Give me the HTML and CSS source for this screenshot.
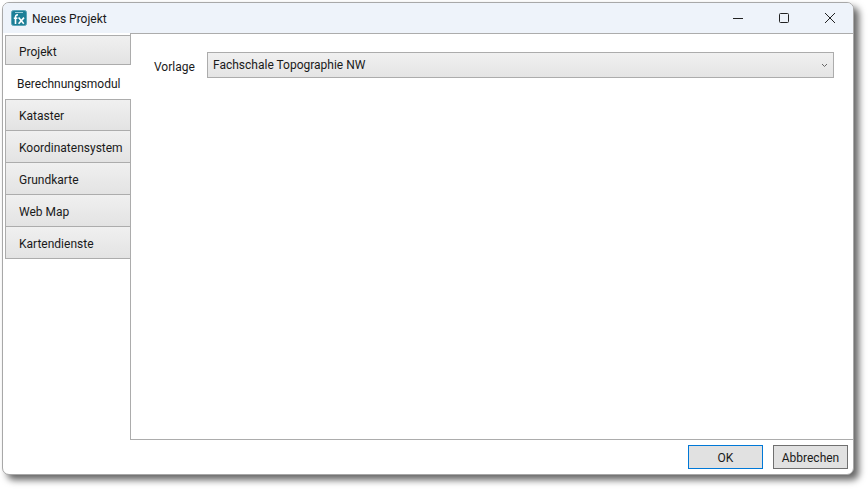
FILE: index.html
```html
<!DOCTYPE html>
<html lang="de">
<head>
<meta charset="utf-8">
<title>Neues Projekt</title>
<link rel="stylesheet" href="styles.css">
</head>
<body>
<div class="window">
  <header class="titlebar">
    <svg class="app-icon" width="16" height="16" viewBox="0 0 16 16"><rect x="0.5" y="0.5" width="15" height="15" rx="2" fill="#1d7f97" stroke="#5aa6b8"/><rect x="4" y="2" width="8" height="1" fill="#9fd0dc"/><path d="M4.5 14V7c0-1.6.8-2.2 2.4-2.1M2.8 8.2h3.6" fill="none" stroke="#fff" stroke-width="1.6"/><path d="M7.6 7.6l5.2 6.2M13 7.6l-5.4 6.2" fill="none" stroke="#fff" stroke-width="1.6"/></svg>
    <span class="title">Neues Projekt</span>
    <div class="caption-buttons">
      <button class="caption" aria-label="Minimieren"><svg width="12" height="12" viewBox="0 0 12 12"><path d="M1 6.5h10" stroke="#222" fill="none"/></svg></button>
      <button class="caption" aria-label="Maximieren"><svg width="12" height="12" viewBox="0 0 12 12"><rect x="1.5" y="1.5" width="9" height="9" rx="1" stroke="#222" fill="none"/></svg></button>
      <button class="caption" aria-label="Schließen"><svg width="12" height="12" viewBox="0 0 12 12"><path d="M1 1l10 10M11 1L1 11" stroke="#222" fill="none"/></svg></button>
    </div>
  </header>
  <div class="body">
    <nav class="tabs">
      <div class="tab first">Projekt</div>
      <div class="tab active">Berechnungsmodul</div>
      <div class="tab after-active">Kataster</div>
      <div class="tab">Koordinatensystem</div>
      <div class="tab">Grundkarte</div>
      <div class="tab">Web Map</div>
      <div class="tab">Kartendienste</div>
    </nav>
    <main class="panel">
      <div class="form-row">
        <label class="label">Vorlage</label>
        <div class="combo">
          <span>Fachschale Topographie NW</span>
          <svg width="7" height="5" viewBox="0 0 7 5"><path d="M1 1l2.5 2.5L6 1" stroke="#666" fill="none"/></svg>
        </div>
      </div>
    </main>
  </div>
  <footer class="footer">
    <button class="btn default">OK</button>
    <button class="btn">Abbrechen</button>
  </footer>
</div>
</body>
</html>
```
FILE: styles.css
```css
* { box-sizing: border-box; }
html, body { margin: 0; padding: 0; background: #fff; }
body { width: 868px; height: 489px; overflow: hidden; padding: 2px 0 0 2px; font-family: Roboto, sans-serif; font-size: 12px; color: #1a1a1a; }
.window { width: 852px; height: 473px; display: flex; flex-direction: column; background: #fff; border: 1px solid #a8a8a8; border-radius: 7px; box-shadow: 5px 5px 7px rgba(0,0,0,.6); overflow: hidden; }
.titlebar { height: 30px; flex: none; display: flex; align-items: center; background: #eef3fa; padding-left: 8px; }
.app-icon { flex: none; }
.title { margin-left: 5px; padding-top: 1px; }
.caption-buttons { margin-left: auto; display: flex; }
.caption { width: 46px; height: 30px; background: none; border: 0; padding: 0; display: flex; align-items: center; justify-content: center; }
.body { flex: 1; display: flex; min-height: 0; }
.tabs { width: 127px; flex: none; display: flex; flex-direction: column; padding-top: 2px; }
.tab { height: 32px; margin-left: 2px; display: flex; align-items: center; padding: 2px 0 0 13px; background: linear-gradient(#f0f0f0, #e3e3e3); border: 1px solid #acacac; border-right: 0; border-top: 0; }
.tab.first { height: 30px; padding-top: 3px; border-top: 1px solid #acacac; }
.tab.active { height: 34px; margin-left: 0; padding: 3px 0 0 14px; background: #fff; border: 0; margin-right: -1px; position: relative; z-index: 1; }
.tab.after-active { border-top: 1px solid #acacac; }
.panel { flex: 1; border: 1px solid #acacac; border-right: 0; padding: 18px 19px 0 23px; }
.form-row { display: flex; align-items: center; }
.label { width: 53px; flex: none; padding-top: 3px; }
.combo { flex: 1; height: 26px; display: flex; align-items: center; justify-content: space-between; padding: 0 5px; background: linear-gradient(#f0f0f0, #e4e4e4); border: 1px solid #acacac; }
.footer { height: 34px; flex: none; display: flex; justify-content: flex-end; gap: 10px; padding: 5px 5px 0 0; }
.btn { width: 75px; height: 24px; background: #e1e1e1; border: 1px solid #707070; font: inherit; color: inherit; padding: 2px 0 0; }
.btn.default { border-color: #0078d7; }
```
